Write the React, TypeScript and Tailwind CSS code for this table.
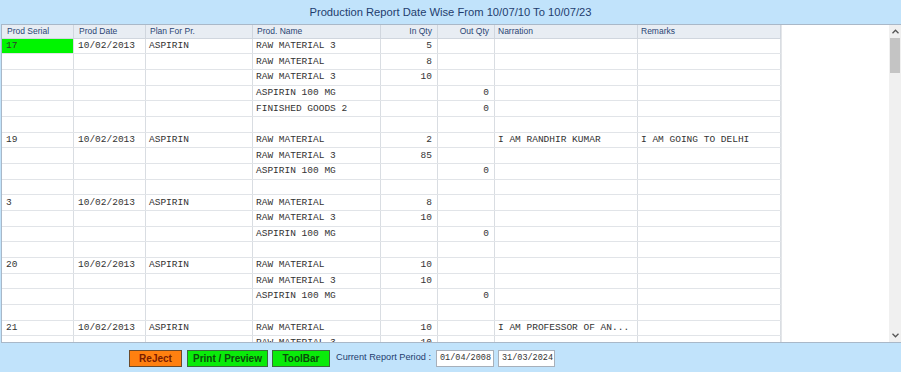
import React from 'react';

type Row = {
  serial?: string;
  date?: string;
  plan?: string;
  name?: string;
  inQty?: string;
  outQty?: string;
  narration?: string;
  remarks?: string;
  hi?: boolean;
};

const rows: Row[] = [
  { serial: '17', date: '10/02/2013', plan: 'ASPIRIN', name: 'RAW MATERIAL 3', inQty: '5', hi: true },
  { name: 'RAW MATERIAL', inQty: '8' },
  { name: 'RAW MATERIAL 3', inQty: '10' },
  { name: 'ASPIRIN 100 MG', outQty: '0' },
  { name: 'FINISHED GOODS 2', outQty: '0' },
  {},
  { serial: '19', date: '10/02/2013', plan: 'ASPIRIN', name: 'RAW MATERIAL', inQty: '2', narration: 'I AM RANDHIR KUMAR', remarks: 'I AM GOING TO DELHI' },
  { name: 'RAW MATERIAL 3', inQty: '85' },
  { name: 'ASPIRIN 100 MG', outQty: '0' },
  {},
  { serial: '3', date: '10/02/2013', plan: 'ASPIRIN', name: 'RAW MATERIAL', inQty: '8' },
  { name: 'RAW MATERIAL 3', inQty: '10' },
  { name: 'ASPIRIN 100 MG', outQty: '0' },
  {},
  { serial: '20', date: '10/02/2013', plan: 'ASPIRIN', name: 'RAW MATERIAL', inQty: '10' },
  { name: 'RAW MATERIAL 3', inQty: '10' },
  { name: 'ASPIRIN 100 MG', outQty: '0' },
  {},
  { serial: '21', date: '10/02/2013', plan: 'ASPIRIN', name: 'RAW MATERIAL', inQty: '10', narration: 'I AM PROFESSOR OF AN...' },
  { name: 'RAW MATERIAL 3', inQty: '10' },
];

const cell = 'h-full border-r border-[#d9dde2] truncate flex items-center';

function HeaderRow() {
  const h = 'h-full border-r border-[#d0d6de] flex items-center truncate';
  return (
    <div className="flex h-[14px] bg-[#e8edf3] border-b border-[#d0d6de] text-[8.5px] text-[#2a4573] font-['Liberation_Sans',Arial,sans-serif]">
      <div className={`${h} w-[72px] pl-[5px]`}>Prod Serial</div>
      <div className={`${h} w-[72px] pl-[5px]`}>Prod Date</div>
      <div className={`${h} w-[107px] pl-[4px]`}>Plan For Pr.</div>
      <div className={`${h} w-[128px] pl-[4px]`}>Prod. Name</div>
      <div className={`${h} w-[57px] justify-end pr-[5px]`}>In Qty</div>
      <div className={`${h} w-[57px] justify-end pr-[5px]`}>Out Qty</div>
      <div className={`${h} w-[143px] pl-[3px]`}>Narration</div>
      <div className={`${h} w-[143px] pl-[3px]`}>Remarks</div>
    </div>
  );
}

function DataRow({ r }: { r: Row }) {
  return (
    <div className="flex h-[15.67px] shrink-0 border-b border-[#e1e4e8] text-[9.5px] text-[#333] font-['Liberation_Mono','Courier_New',monospace]">
      <div className={`${cell} w-[72px] pl-[4px] ${r.hi ? 'bg-[#00f500]' : ''}`}>{r.serial}</div>
      <div className={`${cell} w-[72px] pl-[4px]`}>{r.date}</div>
      <div className={`${cell} w-[107px] pl-[3px]`}>{r.plan}</div>
      <div className={`${cell} w-[128px] pl-[3px]`}>{r.name}</div>
      <div className={`${cell} w-[57px] justify-end pr-[5px]`}>{r.inQty}</div>
      <div className={`${cell} w-[57px] justify-end pr-[5px]`}>{r.outQty}</div>
      <div className={`${cell} w-[143px] pl-[3px]`}>{r.narration}</div>
      <div className={`${cell} w-[143px] pl-[3px]`}>{r.remarks}</div>
    </div>
  );
}

function Scrollbar() {
  return (
    <div className="w-[12px] h-full bg-[#f0f0f0] flex flex-col">
      <div className="h-[13px] flex items-center justify-center">
        <svg width="7" height="5" viewBox="0 0 7 5">
          <path d="M0.5 4.2 L3.5 1.2 L6.5 4.2" fill="none" stroke="#555" strokeWidth="1.3" />
        </svg>
      </div>
      <div className="h-[35px] mx-[1px] bg-[#c4c4c4]" />
      <div className="flex-1" />
      <div className="h-[13px] flex items-center justify-center">
        <svg width="7" height="5" viewBox="0 0 7 5">
          <path d="M0.5 0.8 L3.5 3.8 L6.5 0.8" fill="none" stroke="#555" strokeWidth="1.3" />
        </svg>
      </div>
    </div>
  );
}

export default function App() {
  return (
    <div className="w-[901px] h-[372px] bg-[#c1e3fb] flex flex-col overflow-hidden font-['Liberation_Sans',Arial,sans-serif]">
      <div className="h-[24px] shrink-0 flex items-center justify-center text-[11.2px] text-[#1f3d6e]">
        Production Report Date Wise From 10/07/10 To 10/07/23
      </div>

      <div className="h-[319px] shrink-0 ml-[1px] flex bg-white border-t border-l border-b border-[#a9b8c8]">
        <div className="w-[779px] h-full overflow-hidden flex flex-col">
          <HeaderRow />
          {rows.map((r, i) => (
            <DataRow key={i} r={r} />
          ))}
        </div>
        <div className="flex-1 border-l border-[#e4e6e9]" />
        <Scrollbar />
      </div>

      <div className="flex-1 flex items-center pl-[129px] pt-[1px]">
        <button className="w-[53px] h-[17px] bg-[#ff8010] border border-[#6b4a2a] text-[10px] font-bold text-[#7a1c00] flex items-center justify-center">
          ReJect
        </button>
        <button className="ml-[5px] w-[81px] h-[17px] bg-[#0aeb0a] border border-[#3c6b3c] text-[10px] font-bold text-[#0b4d0b] flex items-center justify-center">
          Print / Preview
        </button>
        <button className="ml-[4px] w-[58px] h-[17px] bg-[#0aeb0a] border border-[#3c6b3c] text-[10px] font-bold text-[#0b4d0b] flex items-center justify-center">
          ToolBar
        </button>
        <span className="ml-[6px] w-[94px] text-[9.2px] text-[#1f3d6e] whitespace-nowrap">Current Report Period :</span>
        <div className="ml-[6px] w-[58px] h-[17px] bg-white border border-[#a8b0ba] text-[8.5px] text-[#333] flex items-center pl-[3px] font-['Liberation_Mono','Courier_New',monospace]">
          01/04/2008
        </div>
        <div className="ml-[4px] w-[57px] h-[17px] bg-white border border-[#a8b0ba] text-[8.5px] text-[#333] flex items-center pl-[3px] font-['Liberation_Mono','Courier_New',monospace]">
          31/03/2024
        </div>
      </div>
    </div>
  );
}
